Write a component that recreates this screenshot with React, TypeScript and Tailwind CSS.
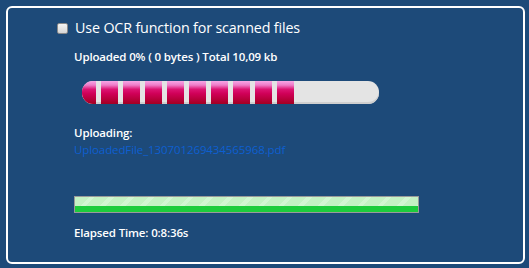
import React from "react";

const segments = Array.from({ length: 9 }, (_, i) => i);

const PinkSegment: React.FC<{ first?: boolean }> = ({ first }) => (
  <div
    className={`h-full shrink-0 bg-[linear-gradient(to_bottom,#f7a6e6_0%,#ee7cc8_18%,#dc1472_36%,#d00058_55%,#a30022_100%)] ${
      first ? "w-[14px]" : "w-[17px] ml-[5px]"
    }`}
  />
);

export default function App() {
  return (
    <div className="w-[529px] h-[268px] bg-[#1d4a79] pl-[6px] pt-[6px] pr-[4px] pb-[4px] font-['Open_Sans','Noto_Sans',sans-serif]">
      <div className="w-full h-full border-2 border-white rounded-[6px] flex flex-col">
        {/* OCR option */}
        <label className="flex items-center mt-[11px] ml-[49px] h-[18px]">
          <span className="w-[11px] h-[11px] rounded-[2px] border border-[#8a8a8a] bg-[linear-gradient(to_bottom,#f4f4f4,#d6d6d6)]" />
          <span className="ml-[7px] text-[14.3px] text-white leading-none tracking-[-0.15px]">
            Use OCR function for scanned files
          </span>
        </label>

        <div className="ml-[66px] mt-[14px] text-[11.5px] font-semibold text-white leading-none tracking-[-0.15px]">
          Uploaded 0% ( 0 bytes ) Total 10,09 kb
        </div>

        {/* segmented progress */}
        <div className="ml-[74px] mt-[18px] w-[297px] h-[23px] rounded-[11px] bg-[#e4e4e4] overflow-hidden flex shadow-[inset_0_-2px_0_#cfcfcf]">
          <PinkSegment first />
          {segments.map((i) => (
            <PinkSegment key={i} />
          ))}
        </div>

        <div className="ml-[66px] mt-[23px] text-[11.5px] font-semibold text-white leading-none tracking-[-0.15px]">
          Uploading:
        </div>
        <a className="ml-[66px] mt-[6px] text-[11.5px] text-[#0e5fd0] leading-none tracking-[-0.1px] cursor-pointer">
          UploadedFile_130701269434565968.pdf
        </a>

        {/* elapsed progress */}
        <div className="ml-[66px] mt-[40px] w-[345px] h-[17px] border border-[#9a9a9a] flex flex-col">
          <div className="h-[9px] bg-[repeating-linear-gradient(135deg,#c4f2c4_0px,#c4f2c4_10px,#d2f6d2_10px,#d2f6d2_14px)]" />
          <div className="flex-1 bg-[#1ccc3c]" />
        </div>

        <div className="ml-[66px] mt-[14px] text-[11.5px] font-semibold text-white leading-none tracking-[-0.15px]">
          Elapsed Time: 0:8:36s
        </div>
      </div>
    </div>
  );
}
